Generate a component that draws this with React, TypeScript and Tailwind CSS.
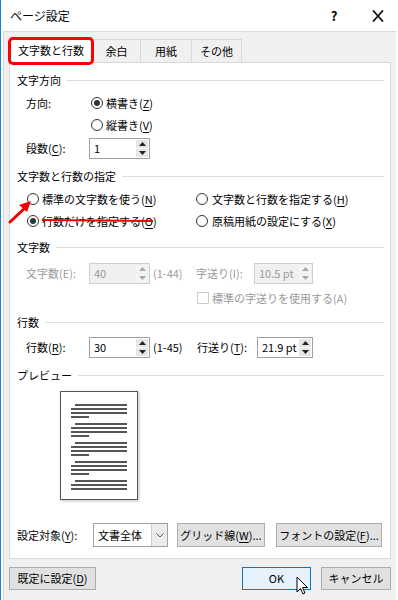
import React from "react";

const font = "font-['Meiryo_UI','Noto_Sans_CJK_JP',sans-serif]";

function Radio({ checked }: { checked?: boolean }) {
  return (
    <span className="flex h-[12px] w-[12px] shrink-0 items-center justify-center rounded-full border border-[#333] bg-white">
      {checked && <span className="h-[6px] w-[6px] rounded-full bg-[#333]" />}
    </span>
  );
}

function Tri({ up, disabled }: { up?: boolean; disabled?: boolean }) {
  return (
    <svg width="7" height="4" viewBox="0 0 7 4">
      <path d={up ? "M0 4 L3.5 0 L7 4 Z" : "M0 0 L3.5 4 L7 0 Z"} fill={disabled ? "#a8a8a8" : "#222"} />
    </svg>
  );
}

// mnemonic letter, underlined without splitting the text run spacing
function K({ c }: { c: string }) {
  return <span className="underline underline-offset-2">{c}</span>;
}

function Spin({ value, className, disabled }: { value: string; className: string; disabled?: boolean }) {
  return (
    <div
      className={`flex h-[21px] shrink-0 border ${
        disabled ? "border-[#cfcfcf] bg-[#f0f0f0] text-[#9a9a9a]" : "border-[#a0a0a0] bg-white text-black"
      } ${className}`}
    >
      <div className="flex flex-1 items-center pl-[4px]">{value}</div>
      <div className="flex w-[14px] flex-col gap-px p-px">
        <div className={`flex flex-1 items-center justify-center ${disabled ? "bg-[#f4f4f4]" : "bg-[#e6e6e6]"}`}>
          <Tri up disabled={disabled} />
        </div>
        <div className={`flex flex-1 items-center justify-center ${disabled ? "bg-[#f4f4f4]" : "bg-[#e6e6e6]"}`}>
          <Tri disabled={disabled} />
        </div>
      </div>
    </div>
  );
}

function Header({ children, className = "" }: { children: React.ReactNode; className?: string }) {
  return (
    <div className={`flex h-[22px] items-center gap-[6px] pl-[7px] pr-[6px] ${className}`}>
      <span>{children}</span>
      <div className="h-px flex-1 bg-[#dcdcdc]" />
    </div>
  );
}

function PageLine({ w, ml }: { w: string; ml: string }) {
  return (
    <div className="h-[4px]">
      <div className={`h-[1.5px] bg-[#555] ${w} ${ml}`} />
    </div>
  );
}

function Preview() {
  const groups = [4, 4, 4, 4, 3];
  return (
    <div className="ml-[50px] mt-[5px] h-[109px] w-[78px] border border-[#555] bg-white pt-[12px] shadow-[1px_1px_3px_rgba(0,0,0,0.25)]">
      {groups.map((n, i) => (
        <div key={i} className="mb-[3px]">
          <PageLine w="w-[52px]" ml="ml-[14px]" />
          <PageLine w="w-[56px]" ml="ml-[10px]" />
          <PageLine w="w-[56px]" ml="ml-[10px]" />
          {n === 4 && <PageLine w="w-[18px]" ml="ml-[10px]" />}
        </div>
      ))}
    </div>
  );
}

export default function App() {
  return (
    <div
      lang="ja"
      className={`relative flex h-[600px] w-[398px] flex-col border-l border-[#1883d7] bg-white text-[11px] leading-none text-black [text-autospace:no-autospace] [text-spacing-trim:space-all] ${font}`}
    >
      {/* title bar */}
      <div className="flex h-[31px] shrink-0 items-center pl-[9px] text-[12px]">
        <span>ページ設定</span>
        <div className="ml-auto mr-[10px] flex items-center gap-[24px]">
          <span className="w-[20px] text-center text-[13px] font-bold">?</span>
          <svg width="20" height="12" viewBox="0 0 20 12">
            <path d="M5 0.5 L15 11.5 M15 0.5 L5 11.5" stroke="#111" strokeWidth="1.8" />
          </svg>
        </div>
      </div>

      {/* body */}
      <div className="ml-[2px] mr-[2px] flex flex-1 flex-col border-l border-t border-[#dadada] bg-[#f0f0f0] px-[5px] pt-[5px]">
        {/* tabs */}
        <div className="flex h-[25px] items-end">
          <div className="relative z-10 -mb-px flex h-[26px] w-[84px] items-center justify-center border border-b-0 border-[#d9d9d9] bg-white">
            文字数と行数
          </div>
          <div className="flex h-[23px] w-[48px] items-center justify-center border border-b-0 border-l-0 border-[#d9d9d9] bg-[#f0f0f0]">
            余白
          </div>
          <div className="flex h-[23px] w-[51px] items-center justify-center border border-b-0 border-l-0 border-[#d9d9d9] bg-[#f0f0f0]">
            用紙
          </div>
          <div className="flex h-[23px] w-[50px] items-center justify-center border border-b-0 border-l-0 border-[#d9d9d9] bg-[#f0f0f0]">
            その他
          </div>
        </div>

        {/* panel */}
        <div className="flex h-[497px] flex-col border border-[#d9d9d9] bg-white pt-[6px]">
          <Header>文字方向</Header>
          <div className="mt-px flex h-[22px] items-center pl-[16px]">
            <span className="w-[63px]">方向:</span>
            <span className="ml-[2px] flex items-center gap-[3px]">
              <Radio checked />
              <span>横書き(<K c="Z" />)</span>
            </span>
          </div>
          <div className="flex h-[22px] items-center pl-[81px]">
            <span className="flex items-center gap-[3px]">
              <Radio />
              <span>縦書き(<K c="V" />)</span>
            </span>
          </div>
          <div className="mt-px flex h-[22px] items-center pl-[16px]">
            <span className="w-[63px]">
              段数(<K c="C" />):
            </span>
            <Spin value="1" className="w-[61px]" />
          </div>

          <Header className="mt-[6px]">文字数と行数の指定</Header>
          <div className="mt-px flex h-[22px] items-center pl-[17px]">
            <span className="flex w-[169px] items-center gap-[3px]">
              <Radio />
              <span>標準の文字数を使う(<K c="N" />)</span>
            </span>
            <span className="flex items-center gap-[4px]">
              <Radio />
              <span>文字数と行数を指定する(<K c="H" />)</span>
            </span>
          </div>
          <div className="flex h-[22px] items-center pl-[17px]">
            <span className="flex w-[169px] items-center gap-[3px]">
              <Radio checked />
              <span>行数だけを指定する(<K c="O" />)</span>
            </span>
            <span className="flex items-center gap-[4px]">
              <Radio />
              <span>原稿用紙の設定にする(<K c="X" />)</span>
            </span>
          </div>

          <Header className="mt-[4px]">文字数</Header>
          <div className="mt-[4px] flex h-[22px] items-center pl-[16px] text-[#9a9a9a]">
            <span className="w-[63px]">文字数(E):</span>
            <Spin value="40" className="w-[61px]" disabled />
            <span className="ml-[3px] w-[43px]">(1-44)</span>
            <span className="w-[58px]">字送り(I):</span>
            <Spin value="10.5 pt" className="w-[59px]" disabled />
          </div>
          <div className="mt-[3px] flex h-[22px] items-center pl-[187px] text-[#9a9a9a]">
            <span className="h-[12px] w-[12px] border border-[#cccccc] bg-white" />
            <span className="ml-[3px]">標準の字送りを使用する(A)</span>
          </div>

          <Header className="mt-[2px]">行数</Header>
          <div className="mt-[3px] flex h-[22px] items-center pl-[16px]">
            <span className="w-[63px]">
              行数(<K c="R" />):
            </span>
            <Spin value="30" className="w-[61px]" />
            <span className="ml-[3px] w-[44px]">(1-45)</span>
            <span className="w-[60px]">
              行送り(<K c="T" />):
            </span>
            <Spin value="21.9 pt" className="w-[56px]" />
          </div>

          <Header className="mt-[6px]">プレビュー</Header>
          <Preview />

          <div className="mt-[23px] flex h-[24px] items-center pl-[7px]">
            <span className="w-[76px]">
              設定対象(<K c="Y" />):
            </span>
            <div className="flex h-[24px] w-[75px] border border-[#a0a0a0] bg-white">
              <span className="flex flex-1 items-center pl-[4px]">文書全体</span>
              <span className="flex w-[16px] items-center justify-center border-l border-[#cfcfcf] bg-[#ececec]">
                <svg width="8" height="5" viewBox="0 0 8 5">
                  <path d="M0.5 0.5 L4 4 L7.5 0.5" fill="none" stroke="#555" strokeWidth="1" />
                </svg>
              </span>
            </div>
            <button className="ml-[9px] flex h-[24px] w-[88px] items-center justify-center border border-[#adadad] bg-[#e1e1e1]">
              <span>グリッド線(<K c="W" />)...</span>
            </button>
            <button className="ml-[11px] flex h-[24px] w-[106px] items-center justify-center border border-[#adadad] bg-[#e1e1e1]">
              <span>フォントの設定(<K c="F" />)...</span>
            </button>
          </div>
        </div>

        {/* dialog buttons */}
        <div className="mt-[8px] flex h-[23px] items-center">
          <button className="flex h-[23px] w-[87px] items-center justify-center border border-[#adadad] bg-[#e1e1e1]">
            <span>既定に設定(<K c="D" />)</span>
          </button>
          <button className="ml-auto flex h-[23px] w-[69px] items-center justify-center border border-[#0078d7] bg-[#e5f1fb]">
            OK
          </button>
          <button className="ml-[10px] flex h-[23px] w-[70px] items-center justify-center border border-[#adadad] bg-[#e1e1e1]">
            キャンセル
          </button>
        </div>
      </div>

      {/* annotation overlay */}
      <div className="pointer-events-none absolute left-[7px] top-[37px] z-20 h-[28px] w-[86px] rounded-[5px] border-[3px] border-[#ff0000]" />
      <svg className="pointer-events-none absolute left-[-1px] top-0 z-20" width="398" height="600" viewBox="0 0 398 600">
        <line x1="42" y1="220" x2="153" y2="221" stroke="#ee0000" strokeWidth="2" />
        <line x1="10" y1="222" x2="26" y2="207" stroke="#ee0000" strokeWidth="3" strokeLinecap="round" />
        <path d="M31 201 L19 205 L27 212 Z" fill="#ee0000" />
        <path
          d="M297 577 L297 592 L300.5 588.5 L303 594 L305 593 L302.5 587.5 L307.5 587.5 Z"
          fill="#fff"
          stroke="#000"
          strokeWidth="1"
          strokeLinejoin="round"
        />
      </svg>
    </div>
  );
}
